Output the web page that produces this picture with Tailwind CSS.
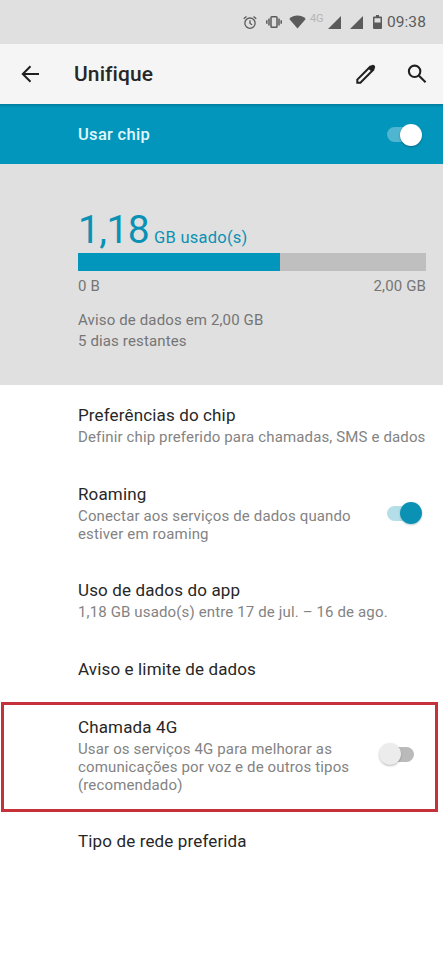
<!DOCTYPE html>
<html lang="pt-BR">
<head>
<meta charset="utf-8">
<title>Unifique</title>
<script src="https://cdn.jsdelivr.net/npm/@tailwindcss/browser@4"></script>
</head>
<body class="w-[443px] h-[960px] overflow-hidden bg-white font-[Roboto,sans-serif] text-[#272727]">
<div class="relative flex h-[960px] w-[443px] flex-col">
  <header class="flex h-11 shrink-0 items-center justify-end bg-[#e0e0e0] pr-[17px] text-[#5b5b5b]">
    <svg class="mr-[9px]" width="14" height="15" viewBox="0 0 15 15" fill="none" stroke="currentColor" stroke-width="1.4"><circle cx="7.5" cy="8.2" r="5.5"/><path d="M7.5 5v3.5l2.3 1.4M.8 3.5 3.7 1M14.2 3.5 11.3 1"/></svg>
    <svg class="mr-[7px]" width="16" height="14" viewBox="0 0 16 14" fill="none" stroke="currentColor" stroke-width="1.5"><rect x="5" y="1.8" width="6" height="10.4" rx=".8"/><path d="M3 3.5v7M13 3.5v7M.8 5.2v3.6M15.2 5.2v3.6"/></svg>
    <svg class="mr-[4px]" width="17" height="14" viewBox="0 0 17 14" fill="currentColor"><path d="M8.5 13.500.3 3.900C2.700 1.700 5.500.6 8.500.6s5.800 1.100 8.200 3.300z"/></svg>
    <span class="mr-[3px] mb-[6px] w-[15px] text-[11px] leading-3 whitespace-nowrap text-[#b5b5b5]">4G</span>
    <svg class="mr-[9px]" width="13" height="13" viewBox="0 0 13 13" fill="currentColor"><path d="M13 0v13H0z"/></svg>
    <svg class="mr-[10px]" width="13" height="13" viewBox="0 0 13 13" fill="currentColor"><path d="M13 0v13H0z"/></svg>
    <svg class="mr-[5px]" width="9" height="14" viewBox="0 0 9 14"><path fill="currentColor" fill-rule="evenodd" d="M3 0h3v1.500h2Q9 1.500 9 2.500V13q0 1-1 1H1q-1 0-1-1V2.500q0-1 1-1h2zM1.500 3.200v4.300h6V3.200z"/></svg>
    <span class="text-[15.500px] leading-5 tracking-[.1px]">09:38</span>
  </header>

  <nav class="flex h-15 shrink-0 items-center bg-[#f5f5f5] pr-4 pl-[21px]">
    <svg width="19" height="18" viewBox="0 0 19 18" fill="none" stroke="#202020" stroke-width="2"><path d="M18 9H2M9.500 1.200 1.800 9l7.700 7.800"/></svg>
    <h1 class="ml-[34px] text-[21px] leading-7 font-medium tracking-[.1px]">Unifique</h1>
    <svg class="ml-auto mr-[31px]" width="20" height="20" viewBox="0 0 20 20"><path d="M1.300 18.700v-3.100L14.200 2.700l3.100 3.100L4.400 18.700z" fill="none" stroke="#202020" stroke-width="2"/><path d="m12.200 4.400 3-3q1.700-1.400 3.300.1 1.500 1.600.1 3.300l-3 3z" fill="#202020"/></svg>
    <svg width="20" height="20" viewBox="0 0 21 21" fill="none" stroke="#202020" stroke-width="2.200"><circle cx="8" cy="7.700" r="6"/><path d="m12.300 12 7.200 7.200"/></svg>
  </nav>

  <section class="flex h-[60px] shrink-0 items-center justify-between bg-[#0396bc] pt-px pr-[21px] pl-[78px] shadow-[inset_0_4px_2px_-2px_rgba(0,0,0,0.14)]">
    <span class="text-[16.500px] font-medium leading-5 tracking-[.3px] text-[#e0f8fd] pt-px">Usar chip</span>
    <div class="relative flex h-[22px] w-[35px] items-center justify-end"><div class="absolute left-0 h-[15px] w-7 rounded-full bg-white/30"></div><div class="relative size-[22px] rounded-full bg-white shadow-[0_1px_2px_rgba(0,0,0,0.3)]"></div></div>
  </section>

  <section class="h-[221px] shrink-0 bg-[#e0e0e0] pt-[45px] pr-[17px] pl-[78px] text-[15px] tracking-[.14px] text-[#757575]">
    <div class="flex h-11 items-baseline text-[#0b91b4]"><span class="text-[39px] leading-[42px] tracking-[-.6px]">1,18</span><span class="ml-[5px] text-[16.500px] tracking-[.25px]">GB usado(s)</span></div>
    <div class="h-[18px] bg-[#bfbfbf]"><div class="h-full w-[202px] bg-[#0396bc]"></div></div>
    <div class="mt-[5px] flex justify-between leading-[21px]"><span>0 B</span><span>2,00 GB</span></div>
    <p class="mt-[13px] leading-[21px]">Aviso de dados em 2,00 GB<br>5 dias restantes</p>
  </section>

  <main class="flex flex-col pt-px pr-[17px] pl-[78px] text-[15px] leading-[18px] tracking-[.14px] text-[#838383]">
    <div class="h-[79px] pt-[19px]"><h2 class="mb-[3px] text-[17px] leading-5 text-[#272727]">Preferências do chip</h2><p class="whitespace-nowrap">Definir chip preferido para chamadas, SMS e dados</p></div>
    <div class="flex h-[96px] justify-between"><div class="pt-[19px]"><h2 class="mb-[3px] text-[17px] leading-5 text-[#272727]">Roaming</h2><p class="whitespace-nowrap">Conectar aos serviços de dados quando<br>estiver em roaming</p></div>
      <div class="relative mt-[37px] mr-1 flex h-[22px] w-[35px] items-center justify-end"><div class="absolute left-0 h-[15px] w-7 rounded-full bg-[#b4dfe9]"></div><div class="relative size-[22px] rounded-full bg-[#0b91b4] shadow-[0_1px_2px_rgba(0,80,100,0.3)]"></div></div></div>
    <div class="h-[79px] pt-[19px]"><h2 class="mb-[3px] text-[17px] leading-5 text-[#272727]">Uso de dados do app</h2><p class="whitespace-nowrap">1,18 GB usado(s) entre 17 de jul. – 16 de ago.</p></div>
    <div class="h-[58px] pt-[19px]"><h2 class="text-[17px] leading-5 text-[#272727]">Aviso e limite de dados</h2></div>
    <div class="relative flex h-[114px] justify-between"><div class="absolute top-[4px] -left-[77px] h-[110px] w-[437px] border-3 border-[#c6303a]"></div><div class="pt-[19px]"><h2 class="mb-[3px] text-[17px] leading-5 text-[#272727]">Chamada 4G</h2><p class="whitespace-nowrap">Usar os serviços 4G para melhorar as<br>comunicações por voz e de outros tipos<br>(recomendado)</p></div>
      <div class="relative mt-[45px] mr-3 flex h-[22px] w-[35px] items-center"><div class="absolute right-0 h-[15px] w-7 rounded-full bg-[#bababa]"></div><div class="relative size-[22px] rounded-full bg-[#ececec] shadow-[0_1px_2px_rgba(0,0,0,0.25)]"></div></div></div>
    <div class="h-[58px] pt-[19px]"><h2 class="text-[17px] leading-5 text-[#272727]">Tipo de rede preferida</h2></div>
  </main>
</div>
</body>
</html>
